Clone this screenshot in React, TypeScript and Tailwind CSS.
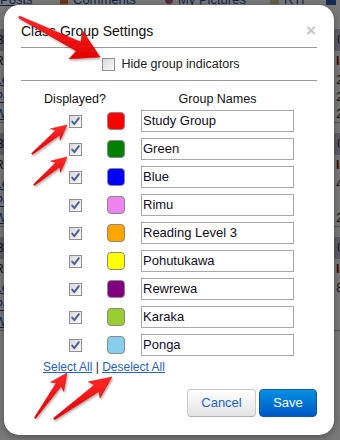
import React from 'react';

const groups = [
  { name: 'Study Group', color: 'bg-[#ff0000]' },
  { name: 'Green', color: 'bg-[#008000]' },
  { name: 'Blue', color: 'bg-[#0000ff]' },
  { name: 'Rimu', color: 'bg-[#ee82ee]' },
  { name: 'Reading Level 3', color: 'bg-[#ffa500]' },
  { name: 'Pohutukawa', color: 'bg-[#ffff00]' },
  { name: 'Rewrewa', color: 'bg-[#800080]' },
  { name: 'Karaka', color: 'bg-[#9acd32]' },
  { name: 'Ponga', color: 'bg-[#87ceeb]' },
];

// tail -> tip, returns polygon points for a tapered red arrow
const arrowPoints = (
  x1: number, y1: number, x2: number, y2: number,
  headL: number, headW: number, shaftW: number, tailW: number
) => {
  const len = Math.hypot(x2 - x1, y2 - y1);
  const ux = (x2 - x1) / len, uy = (y2 - y1) / len;
  const nx = -uy, ny = ux;
  const bx = x2 - ux * headL, by = y2 - uy * headL;
  const jx = bx + ux * 3, jy = by + uy * 3;
  const pts = [
    [x1 + nx * tailW / 2, y1 + ny * tailW / 2],
    [jx + nx * shaftW / 2, jy + ny * shaftW / 2],
    [bx + nx * headW / 2, by + ny * headW / 2],
    [x2, y2],
    [bx - nx * headW / 2, by - ny * headW / 2],
    [jx - nx * shaftW / 2, jy - ny * shaftW / 2],
    [x1 - nx * tailW / 2, y1 - ny * tailW / 2],
  ];
  return pts.map(p => p[0].toFixed(1) + ',' + p[1].toFixed(1)).join(' ');
};

const arrows = [
  arrowPoints(19, 17, 100, 57, 27, 31, 10, 2),
  arrowPoints(32, 154, 67, 125, 15, 15, 6, 1.5),
  arrowPoints(34, 185, 67, 157, 15, 15, 6, 1.5),
  arrowPoints(35, 418, 67, 373, 17, 16, 6, 1.5),
  arrowPoints(54, 419, 112, 377, 22, 20, 8, 2),
];

const CheckBox: React.FC<{ checked?: boolean }> = ({ checked }) => (
  <span className="w-[13px] h-[13px] border border-[#8e8f8f] bg-gradient-to-br from-[#d8d8d8] to-[#fbfbfb] flex items-center justify-center shrink-0">
    {checked && (
      <svg width="11" height="11" viewBox="0 0 11 11">
        <path d="M2.2 5.6 L4.3 8.2 L8.9 2.2" fill="none" stroke="#4a5d96" strokeWidth="1.9" strokeLinecap="round" strokeLinejoin="round" />
      </svg>
    )}
  </span>
);

const BgSection: React.FC<{ right: string[] }> = ({ right }) => (
  <div className="border-b border-[#bbbbbb]">
    <div className="h-[22px] bg-[#c4c4dc] flex items-center justify-between text-[12px] text-[#222]">
      <span className="-ml-[4px]">Ba</span>
      <span className="mr-[-4px]">0</span>
    </div>
    <div className="h-[20px] flex items-center justify-between text-[12px]">
      <span className="-ml-[5px] text-[#222]">Rc</span>
      <span className="font-bold text-[#7a1010] mr-[-6px]">la</span>
    </div>
    {right.map((r, i) => (
      <div key={i} className="h-[17px] flex items-center justify-between text-[12px]">
        <span className="-ml-[5px] text-[#1a4fb0] underline">{['Le', 'Po', 'Wh'][i]}</span>
        <span className="text-[#222] mr-[-3px]">{r}</span>
      </div>
    ))}
  </div>
);

export default function App() {
  return (
    <div className="relative w-[340px] h-[440px] overflow-hidden bg-white font-['Liberation_Sans',Arial,sans-serif]">
      {/* page behind the dialog */}
      <div className="flex items-center h-[10px] -mt-[5px] text-[13px] text-[#1a4fb0]">
        <span className="underline w-[60px]">Posts</span>
        <span className="w-[8px] h-[8px] bg-[#e07a2a] mr-[5px]" />
        <span className="underline w-[92px]">Comments</span>
        <span className="w-[8px] h-[8px] rounded-full bg-[#c0508a] mr-[5px]" />
        <span className="underline w-[92px]">My Pictures</span>
        <span className="w-[9px] h-[7px] bg-[#d8c890] mr-[5px]" />
        <span className="underline w-[42px]">RTI</span>
        <span className="w-[10px] h-[10px] bg-[#2d5fb0]" />
      </div>
      <div className="mt-[24px]">
        <BgSection right={['2', '2', '2']} />
        <div className="h-[10px]" />
        <BgSection right={['4', '', '2']} />
        <div className="h-[10px]" />
        <BgSection right={['8', '', '']} />
      </div>

      {/* overlay */}
      <div className="absolute inset-0 bg-black/[0.52]" />

      {/* dialog */}
      <div className="absolute left-[4px] top-[5px] w-[330px] h-[430px] bg-white rounded-[15px] shadow-[0_2px_8px_rgba(0,0,0,0.35)] px-[17px] pt-[16px] text-[#111]">
        <div className="h-[20px] flex items-center justify-between">
          <h3 className="text-[14px] text-[#111]">Class Group Settings</h3>
          <span className="text-[17px] font-bold text-[#c4c4c4] leading-none -mt-[2px] mr-[1px]">×</span>
        </div>
        <div className="mt-[6px] border-t border-[#9a9a9a]" />
        <div className="h-[32px] flex items-center justify-center gap-[6px] pl-[4px]">
          <CheckBox />
          <span className="text-[12.5px] text-[#222] mt-[1px]">Hide group indicators</span>
        </div>
        <div className="border-t border-[#9a9a9a]" />

        <div className="h-[26px] flex items-end pl-[22px] text-[12.5px] leading-[15px]">
          <span className="w-[64px] text-center">Displayed?</span>
          <span className="ml-[34px] w-[153px] text-center">Group Names</span>
        </div>

        <div className="pl-[22px]">
          {groups.map(g => (
            <div key={g.name} className="h-[28px] flex items-center">
              <div className="w-[64px] flex justify-center">
                <CheckBox checked />
              </div>
              <span className={`w-[18px] h-[18px] rounded-[4px] border border-[#8a8a8a] ${g.color}`} />
              <div className="ml-[16px] w-[153px] h-[22px] border border-[#a9a9a9] flex items-center pl-[1px] text-[13px] text-[#120c22]">
                {g.name}
              </div>
            </div>
          ))}
        </div>

        <div className="h-[16px] flex items-center pl-[22px] text-[12px] text-[#2a62c0]">
          <span className="underline">Select All</span>
          <span className="text-[#222] whitespace-pre"> | </span>
          <span className="underline">Deselect All</span>
        </div>

        <div className="mt-[14px] flex justify-end gap-[3px]">
          <button className="w-[69px] h-[28px] rounded-[4px] border border-[#c8c8c8] border-b-[#b0b0b0] bg-gradient-to-b from-white to-[#e4e4e4] text-[13px] text-[#2463c8]">
            Cancel
          </button>
          <button className="w-[58px] h-[28px] rounded-[4px] border border-[#0a5cb0] bg-gradient-to-b from-[#0a90e2] to-[#0058c6] text-[13px] text-white">
            Save
          </button>
        </div>
      </div>

      {/* red annotation arrows */}
      <svg className="absolute inset-0 pointer-events-none" width="340" height="440" viewBox="0 0 340 440">
        <defs>
          <linearGradient id="red" x1="0" y1="0" x2="0" y2="1">
            <stop offset="0" stopColor="#ff2a2a" />
            <stop offset="1" stopColor="#e00000" />
          </linearGradient>
          <filter id="sh" x="-20%" y="-20%" width="140%" height="140%">
            <feDropShadow dx="1" dy="1.5" stdDeviation="1.2" floodColor="#000" floodOpacity="0.35" />
          </filter>
        </defs>
        {arrows.map((p, i) => (
          <polygon key={i} points={p} fill="url(#red)" stroke="#e00000" strokeWidth="0.5" strokeLinejoin="round" filter="url(#sh)" />
        ))}
      </svg>
    </div>
  );
}
